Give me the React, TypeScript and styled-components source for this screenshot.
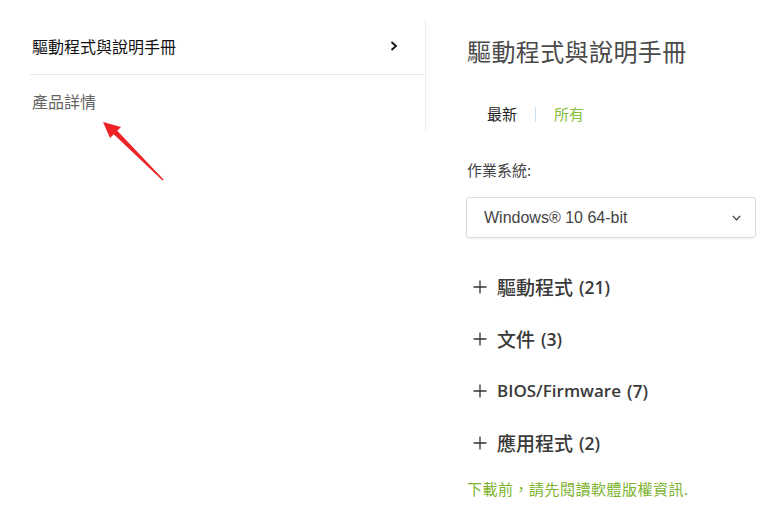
import React from "react";
import styled, { createGlobalStyle } from "styled-components";

const Global = createGlobalStyle`
  html, body { margin: 0; padding: 0; background: #fff; }
  body { font-family: "Noto Sans CJK TC", "Noto Sans", sans-serif; }
  * { box-sizing: border-box; }
`;

const Page = styled.div`
  position: relative;
  width: 761px;
  height: 506px;
  display: flex;
  align-items: flex-start;
  overflow: hidden;
`;

const SideNav = styled.nav`
  margin: 19px 0 0 30px;
  width: 396px;
  border-right: 1px solid #ececec;
  display: flex;
  flex-direction: column;
`;

const NavItem = styled.div<{ $active?: boolean }>`
  height: ${(p) => (p.$active ? 56 : 55)}px;
  display: flex;
  align-items: center;
  justify-content: space-between;
  padding: ${(p) => (p.$active ? "0 27px 2px 2px" : "0 27px 3px 2px")};
  font-size: 16px;
  line-height: 20px;
  color: ${(p) => (p.$active ? "#111" : "#666")};
  border-bottom: ${(p) => (p.$active ? "1px solid #e8e8e8" : "none")};
  font-family: "Noto Sans CJK TC", sans-serif;
`;

const Chevron = styled.svg`
  width: 8px;
  height: 10px;
`;

const Content = styled.main`
  padding: 34px 0 0 41px;
  width: 330px;
  display: flex;
  flex-direction: column;
`;

const Title = styled.h2`
  margin: 0;
  font-size: 24px;
  line-height: 34px;
  font-weight: 400;
  color: #4a4a4a;
  letter-spacing: 0.4px;
`;

const Tabs = styled.div`
  margin-top: 34px;
  padding-left: 20px;
  display: flex;
  align-items: center;
  height: 24px;
`;

const Tab = styled.span<{ $green?: boolean }>`
  font-size: 15px;
  line-height: 24px;
  color: ${(p) => (p.$green ? "#84c03a" : "#222")};
`;

const Sep = styled.span`
  width: 1px;
  height: 15px;
  background: #c9e1f2;
  margin: 0 18px 0 18px;
`;

const Label = styled.div`
  margin-top: 34px;
  font-size: 15px;
  line-height: 20px;
  color: #444;
`;

const Select = styled.div`
  margin-top: 17px;
  margin-left: -1px;
  width: 290px;
  height: 41px;
  border: 1px solid #dcdcdc;
  border-radius: 3px;
  box-shadow: 0 1px 2px rgba(0, 0, 0, 0.06);
  display: flex;
  align-items: center;
  justify-content: space-between;
  padding: 0 14px 0 17px;
  font-family: "Liberation Sans", Arial, sans-serif;
  font-size: 16px;
  color: #444;
`;

const SmallChevron = styled.svg`
  width: 9px;
  height: 6px;
`;

const Accordion = styled.div`
  margin-top: 23px;
  display: flex;
  flex-direction: column;
`;

const Row = styled.div`
  height: 52px;
  display: flex;
  align-items: center;
  gap: 10px;
  padding-left: 6px;
  color: #3a3a3a;
`;

const Name = styled.span<{ $cjk?: boolean }>`
  font-family: ${(p) => (p.$cjk ? '"Noto Sans CJK TC", sans-serif' : '"Open Sans", sans-serif')};
  font-size: ${(p) => (p.$cjk ? 19 : 17)}px;
  font-weight: ${(p) => (p.$cjk ? 500 : 600)};
  line-height: 24px;
  display: flex;
  align-items: center;
  gap: 6px;
`;

const Count = styled.span`
  font-family: "Open Sans", sans-serif;
  font-size: 17.5px;
  font-weight: 600;
  line-height: 24px;
`;

const Plus = styled.svg`
  width: 14px;
  height: 14px;
  flex: none;
`;

const Note = styled.div`
  margin-top: 10px;
  font-size: 15px;
  line-height: 20px;
  letter-spacing: 0.5px;
  color: #7db32e;
`;

const Arrow = styled.svg`
  position: absolute;
  left: 98px;
  top: 116px;
  width: 70px;
  height: 70px;
`;

const items = [
  { name: "驅動程式", count: "(21)", cjk: true },
  { name: "文件", count: "(3)", cjk: true },
  { name: "BIOS/Firmware", count: "(7)", cjk: false },
  { name: "應用程式", count: "(2)", cjk: true },
];

export default function App() {
  return (
    <Page>
      <Global />
      <SideNav>
        <NavItem $active>
          <span>驅動程式與說明手冊</span>
          <Chevron viewBox="0 0 8 10">
            <path d="M1.5 1 L6 5 L1.5 9" fill="none" stroke="#111" strokeWidth="1.8" />
          </Chevron>
        </NavItem>
        <NavItem>
          <span>產品詳情</span>
        </NavItem>
      </SideNav>
      <Content>
        <Title>驅動程式與說明手冊</Title>
        <Tabs>
          <Tab>最新</Tab>
          <Sep />
          <Tab $green>所有</Tab>
        </Tabs>
        <Label>作業系統:</Label>
        <Select>
          <span>Windows® 10 64-bit</span>
          <SmallChevron viewBox="0 0 9 6">
            <path d="M0.8 0.8 L4.5 4.8 L8.2 0.8" fill="none" stroke="#333" strokeWidth="1.2" />
          </SmallChevron>
        </Select>
        <Accordion>
          {items.map((it) => (
            <Row key={it.name}>
              <Plus viewBox="0 0 14 14">
                <path d="M7 0.5 V13.5 M0.5 7 H13.5" stroke="#333" strokeWidth="1.3" />
              </Plus>
              <Name $cjk={it.cjk}>
                {it.name}
                <Count>{it.count}</Count>
              </Name>
            </Row>
          ))}
        </Accordion>
        <Note>下載前，請先閱讀軟體版權資訊.</Note>
      </Content>
      <Arrow viewBox="0 0 70 70">
        <polygon points="18.8,14.2 65.5,63.5 64.5,64.5 15.2,17.8" fill="#ee2326" />
        <polygon points="5,6 23,11 12,22" fill="#ee2326" />
      </Arrow>
    </Page>
  );
}
